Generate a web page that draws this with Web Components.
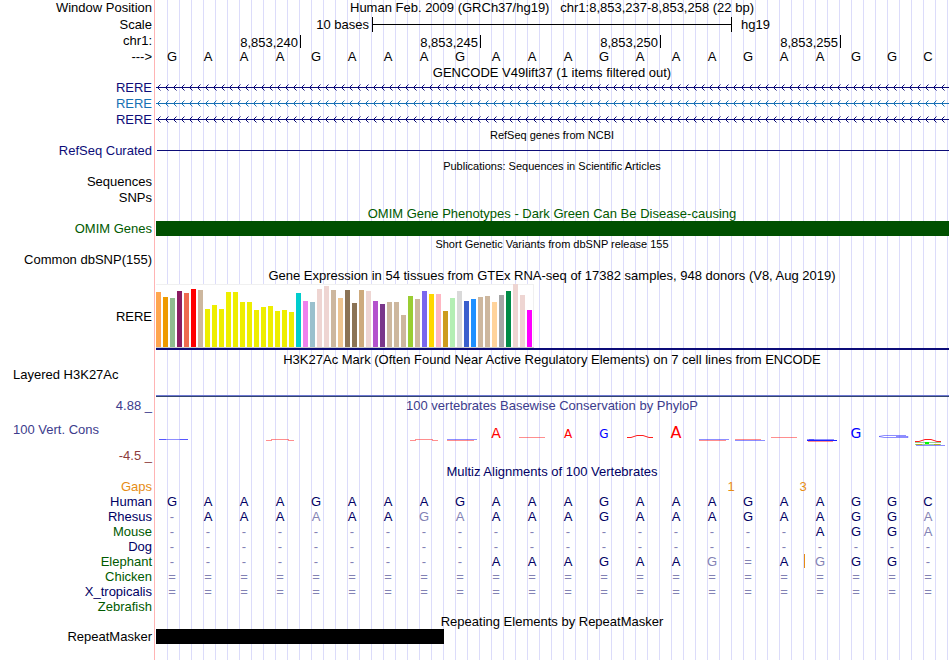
<!DOCTYPE html>
<html lang="en">
<head>
<meta charset="utf-8">
<title>Genome Browser</title>
<style>
    body {
        margin: 0;
        background: #fff;
        color: #000;
        font-family: "Liberation Sans", Arial, sans-serif;
        font-size: 13px;
    }
</style>
</head>
<body>

<template id="genome-view">
    <style>
        :host {
            display: block;
            min-width: 600px;
            --navy: #0c0c78;
            --align: #000064;
            --green: #005a00;
            --wiggle: #3c3c8c;
            --orange: #e68c14;
        }
    </style>
    <slot></slot>
</template>

<template id="track-row">
    <style>
        :host {
            display: grid;
            grid-template-columns: 154px minmax(0, 1fr);
            min-height: 16px;
            line-height: 16px;
        }

        :host([size="title"]),
        :host([size="align"]) {
            min-height: 15px;
            line-height: 15px;
        }

        :host([size="header"]) {
            min-height: 17px;
            line-height: 17px;
        }

        :host([size="title"]) .plot,
        :host([centered]) .plot {
            text-align: center;
        }

        :host([small]) .plot {
            font-size: 11px;
        }

        .label {
            display: flex;
            flex-direction: column;
            justify-content: center;
            box-sizing: border-box;
            padding-right: 2px;
            text-align: right;
            white-space: nowrap;
        }

        :host([top]) .label {
            justify-content: flex-start;
        }

        /* guide lines, three per base */
        .plot {
            min-width: 0;
            white-space: nowrap;
            background:
                linear-gradient(to right, #ffb4b4 1px, #fff 1px) 0 0 / 3px 100% no-repeat,
                linear-gradient(to right, #dcdcfa 1px, transparent 1px) 1px 0 / calc((100% - 4px) / 66) 100% repeat-x;
        }
    </style>
    <div class="label"><slot name="label"></slot></div>
    <div class="plot"><slot></slot></div>
</template>

<template id="scale-bar">
    <style>
        :host {
            display: grid;
            grid-template-columns: minmax(0, 1fr) calc((100% - 4px) * 10 / 22) minmax(0, 1fr);
        }

        .side {
            text-align: right;
            padding-right: 3px;
        }

        .side:last-child {
            text-align: left;
            padding: 0 0 0 9px;
        }

        .bar {
            height: 15px;
            margin: 1px 0;
            border: solid #000;
            border-width: 0 1px;
            background: linear-gradient(#000, #000) 0 7px / 100% 1px no-repeat;
        }
    </style>
    <div class="side"><slot name="length"></slot></div>
    <div class="bar"></div>
    <div class="side"><slot name="assembly"></slot></div>
</template>

<template id="position-ticks">
    <style>
        :host {
            display: grid;
            grid-template-columns: repeat(22, minmax(0, 1fr));
            padding: 2px 1px 1px 3px;
        }

        span {
            display: flex;
            justify-content: flex-end;
            height: 13px;
            line-height: 15px;
            padding-right: 2px;
            border-right: 1px solid #000;
        }
    </style>
</template>

<template id="base-row">
    <style>
        :host {
            display: grid;
            grid-template-columns: repeat(22, minmax(0, 1fr));
            padding-right: 4px;
            text-align: center;
        }

        .muted {
            color: #8282b4;
        }

        .insert {
            background: linear-gradient(#e68c14, #e68c14) 2px 0 / 1px 14px no-repeat;
        }
    </style>
</template>

<template id="gap-counts">
    <style>
        :host {
            display: grid;
            grid-template-columns: repeat(22, minmax(0, 1fr));
            padding: 0 3px 0 1px;
            color: var(--orange);
            text-align: center;
        }
    </style>
</template>

<template id="gene-strand">
    <style>
        :host {
            display: block;
            height: 16px;
            margin: 0 1px 0 2px;
        }

        svg {
            display: block;
            width: 100%;
            height: 16px;
        }
    </style>
    <svg aria-hidden="true">
        <defs>
            <pattern id="arrow" width="8" height="16" patternUnits="userSpaceOnUse">
                <path d="M4.5 4.5L1.5 7.5L4.5 10.5" fill="none" stroke="currentColor" stroke-width="1"/>
            </pattern>
        </defs>
        <rect width="100%" height="16" fill="url(#arrow)"/>
        <rect y="7" width="100%" height="1" fill="currentColor"/>
    </svg>
</template>

<template id="item-bar">
    <style>
        :host {
            display: block;
            height: 15px;
            margin: 0 1px 0 2px;
            background: currentColor;
        }

        :host([thin]) {
            height: 1px;
            margin: 7px 1px 8px 3px;
        }

        :host([bases="8"]) {
            width: calc((100% - 4px) * 8 / 22);
        }
    </style>
</template>

<template id="expression-chart">
    <style>
        :host {
            display: block;
            margin: 0 1px 0 2px;
            border-bottom: 2px solid #0c0c78;
        }

        .bars {
            display: flex;
            align-items: flex-end;
            gap: 2px;
            box-sizing: border-box;
            width: 378px;
            height: 64px;
            background: #fff;
            border-bottom: 1px solid #c8c8c8;
            box-shadow: inset -1px 1px #f0f0f0;
        }

        .bars span {
            width: 5px;
        }
    </style>
    <div class="bars"></div>
</template>

<template id="signal-floor">
    <style>
        :host {
            display: block;
            height: 1px;
            margin: 28px 1px 0 2px;
            background: #6e78d2;
            border-bottom: 1px solid #32466e;
        }
    </style>
</template>

<template id="sequence-logo">
    <style>
        :host {
            display: grid;
            grid-template-columns: repeat(22, minmax(0, 1fr));
            justify-items: center;
            padding-right: 4px;
        }

        svg {
            display: block;
            width: 36px;
            height: 50px;
            fill: none;
            font-family: "DejaVu Sans", sans-serif;
        }

        .a { stroke: #ff1e1e; }
        .g { stroke: #1e1eff; }
        .c { stroke: #96d296; }
        .faint { opacity: .5; }
        text { text-anchor: middle; }
        text.a { fill: #f00; stroke: none; }
        text.g { fill: #00f; stroke: none; }
    </style>
</template>

<genome-view>
    <track-row centered><span slot="label">Window Position</span>Human Feb. 2009 (GRCh37/hg19)&nbsp;&nbsp; chr1:8,853,237-8,853,258 (22 bp)</track-row>
    <track-row size="header"><span slot="label">Scale</span>
        <scale-bar><span slot="length">10 bases</span><span slot="assembly">hg19</span></scale-bar>
    </track-row>
    <track-row><span slot="label">chr1:</span><position-ticks values="8,853,240 8,853,245 8,853,250 8,853,255"></position-ticks></track-row>
    <track-row><span slot="label">---&gt;</span><base-row bases="GAAAGAAAGAAAGAAAGAAGGC"></base-row></track-row>

    <track-row size="title">GENCODE V49lift37 (1 items filtered out)</track-row>
    <track-row style="color: var(--navy)"><span slot="label">RERE</span><gene-strand></gene-strand></track-row>
    <track-row style="color: #1670b4"><span slot="label">RERE</span><gene-strand></gene-strand></track-row>
    <track-row style="color: var(--navy)"><span slot="label">RERE</span><gene-strand></gene-strand></track-row>

    <track-row size="title" small>RefSeq genes from NCBI</track-row>
    <track-row style="color: var(--navy)"><span slot="label">RefSeq Curated</span><item-bar thin></item-bar></track-row>

    <track-row size="title" small>Publications: Sequences in Scientific Articles</track-row>
    <track-row><span slot="label">Sequences</span></track-row>
    <track-row><span slot="label">SNPs</span></track-row>

    <track-row size="title" style="color: var(--green)">OMIM Gene Phenotypes - Dark Green Can Be Disease-causing</track-row>
    <track-row style="color: var(--green)"><span slot="label">OMIM Genes</span><item-bar style="color: #005000"></item-bar></track-row>

    <track-row size="title" small>Short Genetic Variants from dbSNP release 155</track-row>
    <track-row><span slot="label">Common dbSNP(155)</span></track-row>

    <track-row centered>Gene Expression in 54 tissues from GTEx RNA-seq of 17382 samples, 948 donors (V8, Aug 2019)</track-row>
    <track-row><span slot="label">RERE</span><expression-chart></expression-chart></track-row>

    <track-row size="title">
        <div style="padding-top: 2px">H3K27Ac Mark (Often Found Near Active Regulatory Elements) on 7 cell lines from ENCODE</div>
    </track-row>
    <track-row top><span slot="label" style="text-align: left; padding-left: 13px">Layered H3K27Ac</span><signal-floor></signal-floor></track-row>

    <track-row size="header" centered style="color: var(--wiggle)"><span slot="label">4.88 _</span>100 vertebrates Basewise Conservation by PhyloP</track-row>
    <track-row top style="color: var(--wiggle)">
        <span slot="label" style="text-align: left; padding: 8px 0 10px 13px">100 Vert. Cons</span>
        <span slot="label" style="color: #8c3c3c">-4.5 _</span>
        <sequence-logo></sequence-logo>
    </track-row>

    <track-row size="title" style="color: var(--align)">Multiz Alignments of 100 Vertebrates</track-row>
    <track-row size="align" style="color: var(--orange)"><span slot="label">Gaps</span><gap-counts counts="16:1 18:3"></gap-counts></track-row>
    <track-row size="align" style="color: var(--align)"><span slot="label">Human</span><base-row bases="GAAAGAAAGAAAGAAAGAAGGC"></base-row></track-row>
    <track-row size="align" style="color: var(--align)"><span slot="label">Rhesus</span><base-row bases="-AAAaAAgaAAAGAAAGAAGGa"></base-row></track-row>
    <track-row size="align" style="color: var(--align)"><span slot="label" style="color: var(--green)">Mouse</span><base-row bases="------------------AGGa"></base-row></track-row>
    <track-row size="align" style="color: var(--align)"><span slot="label">Dog</span><base-row bases="----------------------"></base-row></track-row>
    <track-row size="align" style="color: var(--align)"><span slot="label" style="color: var(--green)">Elephant</span><base-row bases="---------AAAGAAg=AgGG-" insert="18"></base-row></track-row>
    <track-row size="align" style="color: var(--align)"><span slot="label" style="color: var(--green)">Chicken</span><base-row bases="======================"></base-row></track-row>
    <track-row size="align" style="color: var(--align)"><span slot="label">X_tropicalis</span><base-row bases="======================"></base-row></track-row>
    <track-row size="align" style="color: var(--green)"><span slot="label">Zebrafish</span></track-row>

    <track-row size="title">Repeating Elements by RepeatMasker</track-row>
    <track-row><span slot="label">RepeatMasker</span><item-bar bases="8"></item-bar></track-row>
    <track-row size="title"></track-row>
</genome-view>

<script>
    class TemplateElement extends HTMLElement {
        constructor() {
            super();
            const template = document.getElementById(this.localName);
            this.attachShadow({ mode: "open" }).appendChild(template.content.cloneNode(true));
        }
    }

    const plain = ["genome-view", "track-row", "scale-bar", "gene-strand", "item-bar", "signal-floor"];
    plain.forEach(name => customElements.define(name, class extends TemplateElement {}));

    customElements.define("position-ticks", class extends TemplateElement {
        connectedCallback() {
            // the first tick closes base 4, the rest follow every five bases
            this.getAttribute("values").split(" ").forEach((value, i) => {
                const tick = document.createElement("span");
                tick.textContent = value;
                tick.style.gridColumn = i ? `${i * 5} / ${i * 5 + 5}` : "1 / 5";
                this.shadowRoot.appendChild(tick);
            });
        }
    });

    customElements.define("base-row", class extends TemplateElement {
        connectedCallback() {
            const insert = this.getAttribute("insert");
            [...this.getAttribute("bases")].forEach((base, i) => {
                const cell = document.createElement("span");
                cell.textContent = base.toUpperCase();
                // lower case marks a mismatch with the human base
                if (/[a-z=-]/.test(base)) cell.classList.add("muted");
                if (insert === String(i)) cell.classList.add("insert");
                this.shadowRoot.appendChild(cell);
            });
        }
    });

    customElements.define("gap-counts", class extends TemplateElement {
        connectedCallback() {
            this.getAttribute("counts").split(" ").forEach(entry => {
                const [after, count] = entry.split(":").map(Number);
                const cell = document.createElement("span");
                cell.textContent = count;
                cell.style.gridColumn = `${after} / ${after + 2}`;
                this.shadowRoot.appendChild(cell);
            });
        }
    });

    const TISSUES = [
        ["#ffa54f", 55], ["#ee9a00", 50], ["#8fbc8f", 49], ["#8b1c62", 56], ["#ee6a50", 54], ["#ff0000", 58],
        ["#cdb79e", 57], ["#eeee00", 38], ["#eeee00", 42], ["#eeee00", 38], ["#eeee00", 55], ["#eeee00", 55],
        ["#eeee00", 45], ["#eeee00", 45], ["#eeee00", 37], ["#eeee00", 40], ["#eeee00", 41], ["#eeee00", 36],
        ["#eeee00", 37], ["#eeee00", 35], ["#00cdcd", 54], ["#ee82ee", 46], ["#9ac0cd", 45], ["#eed5d2", 58],
        ["#eed5d2", 61], ["#cdb79e", 57], ["#eec591", 49], ["#8b7355", 57], ["#8b7355", 44], ["#cdaa7d", 57],
        ["#eed5d2", 56], ["#b452cd", 46], ["#7a378b", 43], ["#cdb79e", 45], ["#cdb79e", 45], ["#cdb79e", 32],
        ["#9acd32", 51], ["#cdb79e", 48], ["#7a67ee", 56], ["#ffd700", 53], ["#ffb6c1", 53], ["#cd9b1d", 36],
        ["#b4eeb4", 49], ["#d9d9d9", 56], ["#3a5fcd", 46], ["#1e90ff", 48], ["#cdb79e", 50], ["#cdb79e", 51],
        ["#ffd39b", 45], ["#a6a6a6", 52], ["#008b45", 56], ["#eed5d2", 63], ["#eed5d2", 52], ["#ff00ff", 37]
    ];

    customElements.define("expression-chart", class extends TemplateElement {
        connectedCallback() {
            const bars = this.shadowRoot.querySelector(".bars");
            TISSUES.forEach(([color, height]) => {
                const bar = document.createElement("span");
                bar.style.background = color;
                bar.style.height = height + "px";
                bars.appendChild(bar);
            });
        }
    });

    // one entry per base, y = 0 is the zero line of the score
    const lowA = '<path class="a faint" d="M-14 2.5H-8M8 2.5H14"/><path class="a faint" d="M-9 1.5H9"/>';
    const blueOverRed = '<path class="g faint" d="M-13 1.5H17"/><path class="a faint" d="M-13 2.5H14"/>';
    const redOverBlue = '<path class="a faint" d="M-13 1.5H13"/><path class="g faint" d="M-13 2.5H17"/>';
    const faintA = '<path class="a faint" d="M-13 -.5H13"/>';
    const letter = (base, size) => `<text class="${base.toLowerCase()}" font-size="${size}">${base}</text>`;

    const LOGO = {
        0: '<path class="g faint" d="M-13 1.5H-6M8 1.5H16M-13 1.5H16"/>',
        3: lowA,
        7: lowA,
        8: blueOverRed,
        9: letter("A", 14),
        10: faintA,
        11: letter("A", 12),
        12: letter("G", 12),
        13: '<path class="a" d="M-13 -.5H-9L-3 -2.5H3L9 -.5H13"/>',
        14: letter("A", 16),
        15: blueOverRed,
        16: redOverBlue,
        17: faintA,
        18: '<path class="g faint" d="M-13 1.5H14M-11 1.5H-6"/><path class="g" d="M-13 2.5H17"/><path class="a faint" d="M-12 3.5H13"/>',
        19: letter("G", 14),
        20: '<path class="g faint" d="M14 -2.5H-8L-13 -1.5L-8 -.5H16V-1.5H4"/>',
        21: '<path class="a" d="M-13 3.5H-9L-3 1.5H3L9 3.5H13"/>'
            + '<path class="c" d="M-13 4.5H13M-13 6.5H13"/><path d="M-3 5H1" stroke="#0f0" stroke-width="2"/>'
            + '<path d="M-12 6.5H-6M6 6.5H12" stroke="#b4b428"/><path class="g faint" d="M-12 7.5H17"/>'
    };

    customElements.define("sequence-logo", class extends TemplateElement {
        connectedCallback() {
            let cells = "";
            for (let i = 0; i < 22; i++) {
                cells += `<svg viewBox="-18 -24 36 50">${LOGO[i] || ""}</svg>`;
            }
            this.shadowRoot.innerHTML += cells;
        }
    });
</script>
</body>
</html>
